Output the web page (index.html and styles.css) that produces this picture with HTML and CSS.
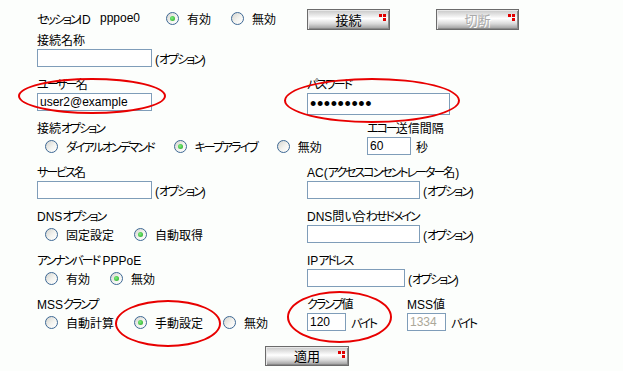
FILE: index.html
```html
<!DOCTYPE html>
<html lang="ja">
<head>
    <meta charset="UTF-8">
    <meta name="viewport" content="width=device-width, initial-scale=1.0">
    <title>PPPoE</title>
    <link rel="stylesheet" href="styles.css">
</head>
<body>
    <div class="page">
        <div class="top">
            <div class="session">
                <span class="sid_label"><span class="k">セッション</span><span class="l">ID</span></span>
                <span class="sid">pppoe0</span>
                <span class="opt"><span class="radio on"></span>有効</span>
                <span class="opt"><span class="radio"></span>無効</span>
            </div>
            <div class="buttons">
                <button class="btn">接続<svg class="dots" width="7" height="7"><rect x="0" y="0" width="3" height="3"/><rect x="4" y="0" width="3" height="3"/><rect x="4" y="4" width="3" height="3"/></svg></button>
                <button class="btn" disabled>切断<svg class="dots" width="7" height="7"><rect x="0" y="0" width="3" height="3"/><rect x="4" y="0" width="3" height="3"/><rect x="4" y="4" width="3" height="3"/></svg></button>
            </div>
        </div>

        <div class="group first">
            <div class="field">
                <div class="label">接続名称</div>
                <div class="ctrl"><input class="txt w115" type="text"><span class="note">(<span class="k">オプション</span>)</span></div>
            </div>
        </div>

        <div class="group">
            <div class="field">
                <div class="label"><span class="k">ユーザー</span>名</div>
                <div class="ctrl"><input class="txt w115" type="text" value="user2@example"></div>
            </div>
            <div class="field">
                <div class="label"><span class="k">パスワード</span></div>
                <div class="ctrl"><input class="txt pass" type="password" value="secret123"></div>
            </div>
        </div>

        <div class="group wide">
            <div class="field">
                <div class="label">接続<span class="k">オプション</span></div>
                <div class="ctrl choices">
                    <span class="opt"><span class="radio"></span><span class="k">ダイアルオンデマンド</span></span>
                    <span class="opt"><span class="radio on"></span><span class="k">キープアライブ</span></span>
                    <span class="opt"><span class="radio"></span>無効</span>
                </div>
            </div>
            <div class="field">
                <div class="label"><span class="k">エコー</span>送信間隔</div>
                <div class="ctrl"><input class="txt w44" type="text" value="60"><span class="unit">秒</span></div>
            </div>
        </div>

        <div class="group">
            <div class="field">
                <div class="label"><span class="k">サービス</span>名</div>
                <div class="ctrl"><input class="txt w115" type="text"><span class="note">(<span class="k">オプション</span>)</span></div>
            </div>
            <div class="field">
                <div class="label"><span class="l">AC</span>(<span class="k">アクセスコンセントレーター</span>名)</div>
                <div class="ctrl"><input class="txt w113" type="text"><span class="note">(<span class="k">オプション</span>)</span></div>
            </div>
        </div>

        <div class="group">
            <div class="field">
                <div class="label"><span class="l">DNS</span><span class="k">オプション</span></div>
                <div class="ctrl choices">
                    <span class="opt"><span class="radio"></span>固定設定</span>
                    <span class="opt"><span class="radio on"></span>自動取得</span>
                </div>
            </div>
            <div class="field">
                <div class="label"><span class="l">DNS</span>問<span class="k">い</span>合<span class="k">わせドメイン</span></div>
                <div class="ctrl"><input class="txt w113" type="text"><span class="note">(<span class="k">オプション</span>)</span></div>
            </div>
        </div>

        <div class="group">
            <div class="field">
                <div class="label"><span class="k">アンナンバード</span> <span class="l">PPPoE</span></div>
                <div class="ctrl choices">
                    <span class="opt"><span class="radio"></span>有効</span>
                    <span class="opt"><span class="radio on"></span>無効</span>
                </div>
            </div>
            <div class="field">
                <div class="label"><span class="l">IP</span><span class="k">アドレス</span></div>
                <div class="ctrl"><input class="txt w98" type="text"><span class="note">(<span class="k">オプション</span>)</span></div>
            </div>
        </div>

        <div class="group">
            <div class="field">
                <div class="label"><span class="l">MSS</span><span class="k">クランプ</span></div>
                <div class="ctrl choices">
                    <span class="opt"><span class="radio"></span>自動計算</span>
                    <span class="opt"><span class="radio on"></span>手動設定</span>
                    <span class="opt"><span class="radio"></span>無効</span>
                </div>
            </div>
            <div class="pair">
                <div class="field clamp">
                    <div class="label"><span class="k">クランプ</span>値</div>
                    <div class="ctrl"><input class="txt w39" type="text" value="120"><span class="unit k">バイト</span></div>
                </div>
                <div class="field">
                    <div class="label"><span class="l">MSS</span>値</div>
                    <div class="ctrl"><input class="txt w39" type="text" value="1334" disabled><span class="unit k">バイト</span></div>
                </div>
            </div>
        </div>

        <button class="btn apply">適用<svg class="dots" width="7" height="7"><rect x="0" y="0" width="3" height="3"/><rect x="4" y="0" width="3" height="3"/><rect x="4" y="4" width="3" height="3"/></svg></button>

        <!-- 赤丸 -->
        <span class="mark m1"></span>
        <span class="mark m2"></span>
        <span class="mark m3"></span>
        <span class="mark m4"></span>
    </div>
</body>
</html>
```

FILE: styles.css
```css
*{
    box-sizing: border-box;
}
body{
    margin: 0;
    background-color: #fcfefc;
    color: #000;
    font-size: 12px;
    font-family: "Liberation Sans", "Noto Sans CJK JP", sans-serif;
    font-feature-settings: "palt";
}
.page{
    position: relative;
    width: 623px;
    height: 371px;
    padding: 9px 0 0 37px;
}
/* かな・英字を元画面の幅に寄せる */
.k{
    letter-spacing: -2px;
}
.l{
    font-family: "Liberation Sans Narrow", "Liberation Sans", sans-serif;
}
.top{
    display: flex;
    align-items: flex-start;
}
.session{
    width: 270px;
    height: 18px;
    display: flex;
    align-items: center;
    white-space: nowrap;
}
.sid_label{
    width: 63px;
    flex-shrink: 0;
}
.sid{
    width: 66px;
    flex-shrink: 0;
}
.buttons{
    display: flex;
    gap: 46px;
}
.btn{
    position: relative;
    width: 83px;
    height: 21px;
    padding: 0;
    border: 1px solid #6b6b6b;
    background: linear-gradient(#c6c6c6, #f2f2f2 35%, #ffffff 45%, #dadada 72%, #9a9a9a);
    box-shadow: inset 1px 1px #e8e8e8, inset -1px -1px #8a8a8a;
    font-size: 13px;
    font-family: "Noto Sans CJK JP", sans-serif;
    color: #000;
    line-height: 19px;
}
.btn:disabled{
    color: #a9a9a9;
    text-shadow: 1px 1px #fff;
}
.dots{
    position: absolute;
    top: 4px;
    right: 3px;
    fill: #e00000;
}
.group{
    display: grid;
    grid-template-columns: 270px auto;
    margin-top: 12px;
}
.group.first{
    margin-top: 5px;
}
.group.wide{
    grid-template-columns: 330px auto;
}
.label{
    height: 13px;
    line-height: 13px;
    white-space: nowrap;
}
.ctrl{
    display: flex;
    align-items: center;
    height: 18px;
    margin-top: 1px;
    white-space: nowrap;
}
.choices{
    padding-left: 8px;
}
.opt{
    display: inline-flex;
    align-items: center;
    margin-right: 20px;
}
.radio{
    position: relative;
    width: 13px;
    height: 13px;
    margin-right: 8px;
    border: 1px solid #3d6894;
    border-radius: 50%;
    background: linear-gradient(135deg, #d4d4cf, #f4f4f0 55%, #ffffff);
}
.radio.on::after{
    content: "";
    position: absolute;
    left: 3px;
    top: 3px;
    width: 5px;
    height: 5px;
    border-radius: 50%;
    background: radial-gradient(circle at 40% 40%, #7ef07e, #21a121);
}
.txt{
    height: 18px;
    margin: 0;
    padding: 0 2px;
    border: 1px solid #7f9db9;
    background-color: #fff;
    font-size: 12px;
    font-family: "Liberation Sans", sans-serif;
    color: #000;
}
.txt:disabled{
    color: #aca899;
}
.pass{
    width: 143px;
    height: 22px;
    align-self: flex-start;
    font-size: 18px;
    letter-spacing: 0.6px;
}
.w115{ width: 115px; }
.w113{ width: 113px; }
.w98{ width: 98px; }
.w44{ width: 44px; }
.w39{ width: 39px; }
.note{
    margin-left: 3px;
}
.unit{
    margin-left: 5px;
}
.pair{
    display: flex;
}
.clamp{
    width: 100px;
}
.apply{
    display: block;
    width: 84px;
    height: 20px;
    margin: 15px 0 0 228px;
    line-height: 18px;
}
.mark{
    position: absolute;
    border: 2px solid #e80000;
    border-radius: 50%;
}
.m1{ left: 18px; top: 78px; width: 148px; height: 36px; }
.m2{ left: 284px; top: 78px; width: 176px; height: 45px; }
.m3{ left: 115px; top: 300px; width: 106px; height: 47px; }
.m4{ left: 287px; top: 291px; width: 105px; height: 52px; }
```
